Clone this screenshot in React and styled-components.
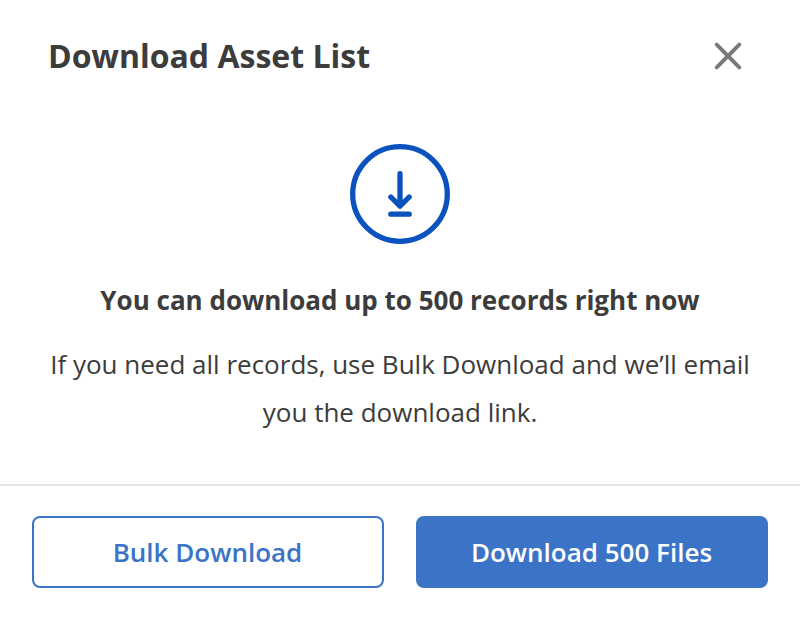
import React from 'react';
import styled, { createGlobalStyle } from 'styled-components';

const GlobalStyle = createGlobalStyle`
    body {
        margin: 0;
        background: #ffffff;
    }
`;

const Modal = styled.div`
    display: flex;
    flex-direction: column;
    box-sizing: border-box;
    width: 800px;
    height: 636px;
    color: #3c3c3c;
    background: #ffffff;
    font-family: 'Open Sans', sans-serif;
`;

const Header = styled.header`
    display: flex;
    align-items: center;
    justify-content: space-between;
    height: 112px;
    box-sizing: border-box;
    padding: 0 56px 0 48px;
`;

const Title = styled.h1`
    margin: 0;
    font-size: 32px;
    font-weight: 700;
    line-height: 48px;
`;

const CloseButton = styled.button`
    display: flex;
    padding: 0;
    border: none;
    background: none;
    cursor: pointer;
`;

const Content = styled.main`
    display: flex;
    flex: 1;
    flex-direction: column;
    align-items: center;
    padding-top: 32px;
    text-align: center;
`;

const Heading = styled.h2`
    margin: 32px 0 0;
    font-size: 26px;
    font-weight: 700;
    line-height: 48px;
`;

const Text = styled.p`
    width: 720px;
    margin: 16px 0 0;
    font-size: 26px;
    line-height: 48px;
`;

const Footer = styled.footer`
    display: flex;
    gap: 32px;
    height: 152px;
    box-sizing: border-box;
    padding: 30px 32px 0;
    border-top: 2px solid #e5e5e5;
`;

const Button = styled.button`
    flex: 1;
    height: 72px;
    padding: 0 1px 0 0;
    border: 2px solid #3b74c6;
    border-radius: 8px;
    color: ${props => props.$primary ? '#ffffff' : '#3b74c6'};
    background: ${props => props.$primary ? '#3b74c6' : '#ffffff'};
    font-family: inherit;
    font-size: 26px;
    font-weight: 600;
    line-height: 36px;
    cursor: pointer;
`;

const CloseIcon = () => (
    <svg width="32" height="32" viewBox="0 0 32 32" fill="none" stroke="#7a7a7a" strokeWidth="4" strokeLinecap="round">
        <path d="M4.7 4.7 27.3 27.3M27.3 4.7 4.7 27.3" />
    </svg>
);

const DownloadIcon = () => (
    <svg width="100" height="100" viewBox="0 0 100 100" fill="none" stroke="#0a52be" strokeWidth="5.3" strokeLinecap="round" strokeLinejoin="round">
        <circle cx="50" cy="50" r="47.3" />
        <path d="M50 29.6V62M40.8 53 50 62.2 59.2 53M40.8 70.2H59.2" />
    </svg>
);

const App = () => (
    <>
        <GlobalStyle />
        <Modal>
            <Header>
                <Title>Download Asset List</Title>
                <CloseButton aria-label="Close">
                    <CloseIcon />
                </CloseButton>
            </Header>
            <Content>
                <DownloadIcon />
                <Heading>You can download up to 500 records right now</Heading>
                <Text>If you need all records, use Bulk Download and we’ll email you the download link.</Text>
            </Content>
            <Footer>
                <Button>Bulk Download</Button>
                <Button $primary>Download 500 Files</Button>
            </Footer>
        </Modal>
    </>
);

export default App;
